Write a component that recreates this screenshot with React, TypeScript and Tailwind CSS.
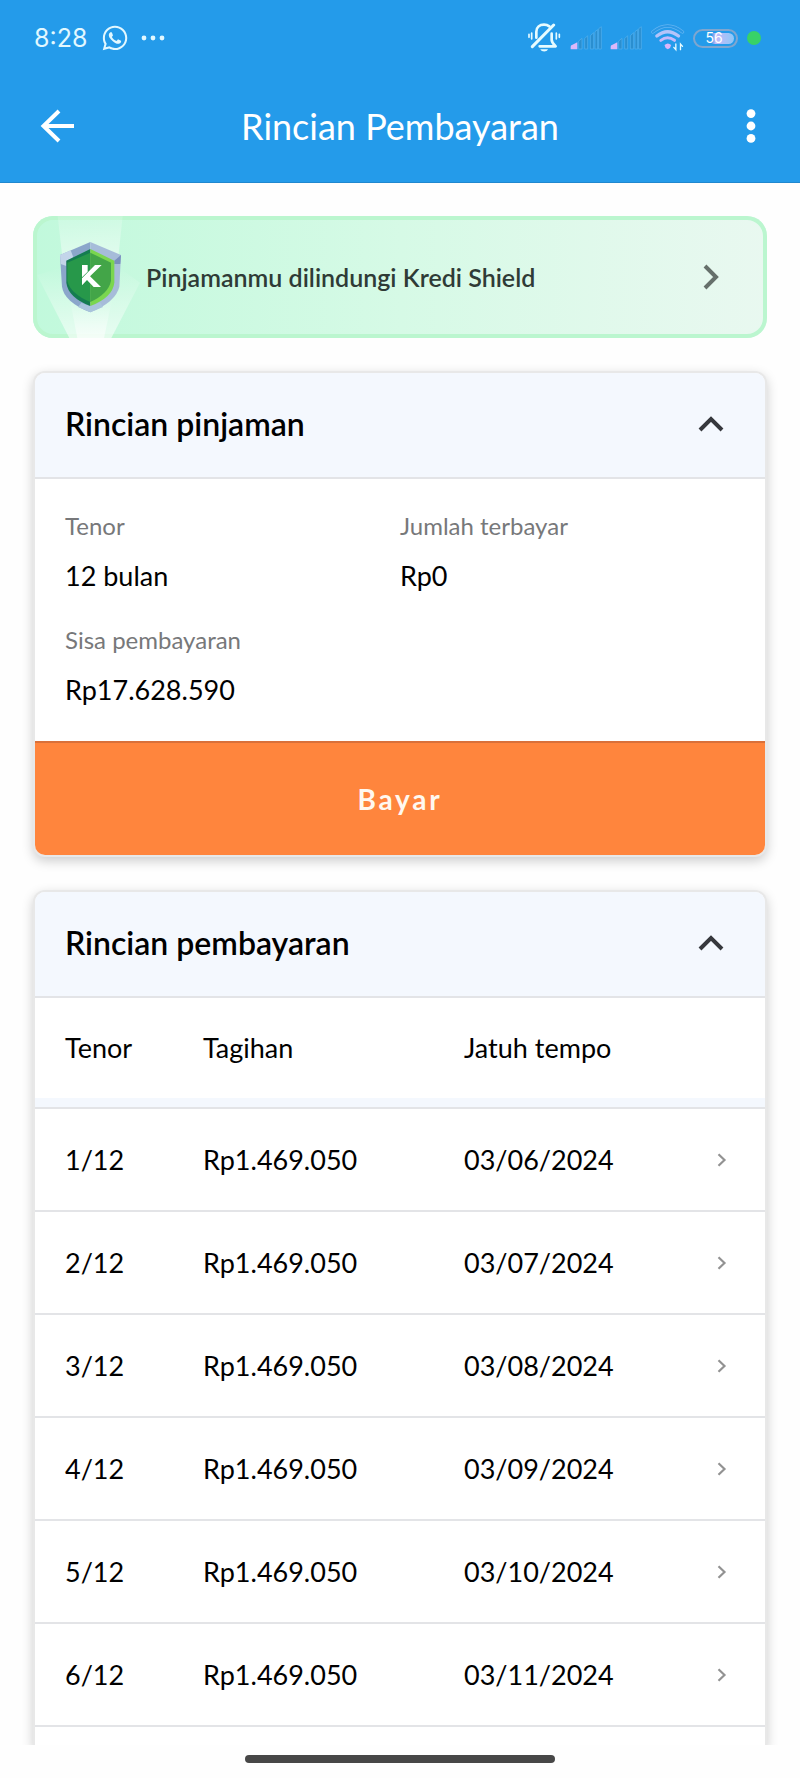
import { useState } from "react";
import { FaWhatsapp } from "react-icons/fa";

const installments = [
    { tenor: "1/12", amount: "Rp1.469.050", dueDate: "03/06/2024" },
    { tenor: "2/12", amount: "Rp1.469.050", dueDate: "03/07/2024" },
    { tenor: "3/12", amount: "Rp1.469.050", dueDate: "03/08/2024" },
    { tenor: "4/12", amount: "Rp1.469.050", dueDate: "03/09/2024" },
    { tenor: "5/12", amount: "Rp1.469.050", dueDate: "03/10/2024" },
    { tenor: "6/12", amount: "Rp1.469.050", dueDate: "03/11/2024" },
];

const loanInfo = [
    { label: "Tenor", value: "12 bulan" },
    { label: "Jumlah terbayar", value: "Rp0" },
    { label: "Sisa pembayaran", value: "Rp17.628.590" },
];

const BellOffIcon = () => (
    <svg viewBox="80 40 102 90" className="h-[30px] w-[34px]" fill="none" stroke="#e6fbff" strokeWidth="8" strokeLinecap="round">
        <path d="M108 84V66C108 52 118 45 131 45C138 45 143 47 147 50" />
        <path d="M154 72V90C154 98 160 103 166 110H118" strokeLinejoin="round" />
        <path d="M96 111L160 46" strokeWidth="9" />
        <path d="M120 119H143C139 128 124 128 120 119Z" fill="#e6fbff" stroke="none" />
        <path d="M94 70V88M86 74V83M168 70V88M177 74V83" strokeWidth="5" />
    </svg>
);

const SignalIcon = () => (
    <svg viewBox="0 0 96 72" className="h-[24px] w-[32px]">
        <path d="M2 70V62Q2 58 6 57L22 49V70Z" fill="#dcb8fa" />
        <g fill="#2a8ecf" stroke="#56b2ee" strokeWidth="2">
            <path d="M26 69V45L36 37V69Z" />
            <path d="M44 69V38L53 29V69Z" />
            <path d="M61 69V29L71 20V69Z" />
            <path d="M75 69V17L83 11V69Z" />
            <path d="M86 69V8L94 2V69Z" />
        </g>
    </svg>
);

const WifiIcon = () => (
    <svg viewBox="450 44 104 84" className="h-[28px] w-[35px]" fill="none" strokeLinecap="round">
        <path d="M458 68Q502 32 547 68" stroke="#62b5f2" strokeWidth="10" />
        <path d="M458 68Q502 32 547 68" stroke="#2b98e6" strokeWidth="6" />
        <path d="M470 80Q502 54 535 80" stroke="#b4c4fa" strokeWidth="10" />
        <path d="M482 93Q502 78 523 93" stroke="#c6b9fb" strokeWidth="9" />
        <path d="M493 107Q503 98 513 107Q512 116 503 120Q494 116 493 107Z" fill="#ddb5fa" />
        <path d="M527 104V121L521 114M541 121V104L547 111" stroke="#e6fbff" strokeWidth="4" />
    </svg>
);

const ShieldArt = () => (
    <svg viewBox="39 48 330 366" className="absolute left-0 top-0 h-[122px] w-[110px]" aria-hidden="true">
        <defs>
            <linearGradient id="beamTop" x1="0" y1="0" x2="0" y2="1">
                <stop offset="0" stopColor="#fff" stopOpacity="0.15" />
                <stop offset="1" stopColor="#fff" stopOpacity="0.5" />
            </linearGradient>
            <linearGradient id="beamBottom" x1="0" y1="0" x2="0" y2="1">
                <stop offset="0" stopColor="#fff" stopOpacity="0" />
                <stop offset="1" stopColor="#fff" stopOpacity="0.6" />
            </linearGradient>
        </defs>
        <path d="M113 48H308L294 180H128Z" fill="url(#beamTop)" />
        <path d="M51 225L130 200H294L360 248L274 414H148Z" fill="url(#beamBottom)" />
        <path d="M150 300H276L252 414H172Z" fill="url(#beamBottom)" />
        {/* metal rim */}
        <path d="M211 126L120 165L126 260Q132 305 211 337Z" fill="#8ba6cb" />
        <path d="M211 126L303 165L298 260Q288 305 211 337Z" fill="#a6bcd9" />
        <path d="M120 165L152 151L160 172L139 182V198L122 192Z" fill="#c3d5ea" />
        <path d="M303 165L283 182V192L301 192Z" fill="#7990bd" />
        <path d="M184 308L211 319L240 307L249 321L211 337L174 321Z" fill="#a9c4dc" />
        {/* green face */}
        <path d="M211 147L139 182V248Q144 292 211 318Z" fill="#157c50" />
        <path d="M211 147L283 182V248Q278 292 211 318Z" fill="#7ad64f" />
        <path d="M211 158L142 188V242Q150 280 211 306Z" fill="#27984a" />
        <path d="M211 158L273 188V242Q266 280 211 306Z" fill="#43a548" />
        {/* K mark */}
        <path d="M186 195H203V215L186 232Z" fill="#fff" />
        <path d="M225 195H245L210 229L243 261H221L201 240L186 256V235Z" fill="#fff" />
    </svg>
);

const StatusBar = () => (
    <div className="flex h-[76px] items-center justify-between pl-[34px] pr-[39px]">
        <div className="flex items-center text-[#e2f8ff]">
            <span className="font-[Inter,sans-serif] text-[25px] leading-8">8:28</span>
            <FaWhatsapp className="ml-[14px] size-7" />
            <svg viewBox="0 0 24 6" className="ml-[12px] h-[6px] w-[24px]" fill="currentColor">
                <circle cx="3" cy="3" r="2.4" />
                <circle cx="12" cy="3" r="2.4" />
                <circle cx="21" cy="3" r="2.4" />
            </svg>
        </div>
        <div className="flex items-center">
            <BellOffIcon />
            <span className="ml-[9px] flex gap-2">
                <SignalIcon />
                <SignalIcon />
            </span>
            <span className="ml-[8px]">
                <WifiIcon />
            </span>
            <span className="ml-[8px] flex h-[19px] w-[45px] items-center rounded-full border-2 border-[#7fa6cf] p-[2px]">
                <span className="flex h-full w-full items-center justify-center rounded-full bg-linear-to-r from-[#249bea] from-40% via-[#c0b8f8] via-50% to-[#8cc8f8] pr-[3px] font-[Inter,sans-serif] text-[14px] leading-none text-white">
                    56
                </span>
            </span>
            <span className="ml-[9px] size-[14px] rounded-full bg-[#38d268]" />
        </div>
    </div>
);

const CardHeader = ({ title, open, onToggle }: { title: string; open: boolean; onToggle: () => void }) => (
    <h2 className="border-b-2 border-[#e3e4e7] bg-[#f4f8fe]">
        <button
            type="button"
            aria-expanded={open}
            onClick={onToggle}
            className="flex h-[104px] w-full items-center justify-between pb-[2px] pl-[30px] pr-[41px] text-left text-[32px] font-semibold leading-9 text-black"
        >
            {title}
            <svg viewBox="0 0 26 16" className={`h-4 w-[26px] ${open ? "" : "rotate-180"}`} fill="none" stroke="#36383d" strokeWidth="4">
                <path d="M2 14L13 3L24 14" />
            </svg>
        </button>
    </h2>
);

export default function App() {
    const [loanOpen, setLoanOpen] = useState(true);
    const [paymentOpen, setPaymentOpen] = useState(true);

    return (
        <div className="flex h-screen flex-col bg-[#fefefe] font-[Lato,sans-serif] text-black">
            <header className="shrink-0 border-b border-[#2088cf] bg-[#249bea]">
                <StatusBar />
                <div className="mb-[6px] flex h-[100px] items-center justify-between px-[40px] text-white">
                    <button type="button" aria-label="Kembali" className="w-[34px]">
                        <svg viewBox="0 0 34 34" className="size-[34px]" fill="none" stroke="currentColor" strokeWidth="4">
                            <path d="M19 2L3.5 17L19 32M3.5 17H34" />
                        </svg>
                    </button>
                    <h1 className="text-[36px] leading-10">Rincian Pembayaran</h1>
                    <button type="button" aria-label="Menu" className="flex w-[34px] justify-end pr-1">
                        <svg viewBox="0 0 10 34" className="h-[34px] w-[10px]" fill="currentColor">
                            <circle cx="5" cy="4.6" r="4.4" />
                            <circle cx="5" cy="17" r="4.4" />
                            <circle cx="5" cy="29.4" r="4.4" />
                        </svg>
                    </button>
                </div>
            </header>

            <main className="flex min-h-0 flex-1 flex-col overflow-hidden px-[35px] pt-[33px]">
                <button
                    type="button"
                    className="relative -mx-[2px] flex h-[122px] shrink-0 items-center justify-between overflow-hidden rounded-[20px] bg-linear-to-r from-[#c1f9dc] via-[#d6fae6] to-[#e9f8f0] pl-[113px] pr-[48px] text-left shadow-[inset_0_0_0_4px_#bbf6cf]"
                >
                    <ShieldArt />
                    <span className="text-[25px] font-semibold leading-8 text-[#2f3b36]">Pinjamanmu dilindungi Kredi Shield</span>
                    <svg viewBox="0 0 16 26" className="h-[26px] w-4" fill="none" stroke="#66706b" strokeWidth="4">
                        <path d="M2 2L13 13L2 24" />
                    </svg>
                </button>

                <section className="mt-[35px] shrink-0 overflow-hidden rounded-[10px] bg-white shadow-[0_0_0_2px_#e8e8e8,0_4px_12px_2px_rgba(0,0,0,0.2)]">
                    <CardHeader title="Rincian pinjaman" open={loanOpen} onToggle={() => setLoanOpen(!loanOpen)} />
                    {loanOpen && (
                        <dl className="grid grid-cols-2 gap-y-[29px] px-[30px] pb-[33px] pt-[30px]">
                            {loanInfo.map((item) => (
                                <div key={item.label}>
                                    <dt className="text-[24px] leading-[34px] text-[#77787a]">{item.label}</dt>
                                    <dd className="mt-[15px] text-[27px] leading-9">{item.value}</dd>
                                </div>
                            ))}
                        </dl>
                    )}
                    <button
                        type="button"
                        className="block h-[114px] w-full border-t-2 border-[#d9703a] bg-[#ff853d] text-[28px] font-bold leading-9 tracking-widest text-[#fff8ef]"
                    >
                        Bayar
                    </button>
                </section>

                <section className="mt-[37px] flex-1 overflow-hidden rounded-t-[10px] bg-white shadow-[0_0_0_2px_#e8e8e8,0_4px_12px_2px_rgba(0,0,0,0.2)]">
                    <CardHeader title="Rincian pembayaran" open={paymentOpen} onToggle={() => setPaymentOpen(!paymentOpen)} />
                    {paymentOpen && (
                        <table className="w-full table-fixed border-collapse text-left text-[27px] leading-9">
                            <thead>
                                <tr className="h-[100px]">
                                    <th scope="col" className="w-[168px] pl-[30px] font-normal">Tenor</th>
                                    <th scope="col" className="w-[261px] font-normal">Tagihan</th>
                                    <th scope="col" className="font-normal">Jatuh tempo</th>
                                    <th scope="col" className="w-[60px]" aria-label="Detail" />
                                </tr>
                                <tr className="h-[10px] border-b-2 border-[#e3e4e7] bg-[#f4f8fe]">
                                    <td colSpan={4} />
                                </tr>
                            </thead>
                            <tbody>
                                {installments.map((item) => (
                                    <tr key={item.tenor} className="h-[103px] border-b-2 border-[#e3e4e7]">
                                        <td className="pl-[30px]">{item.tenor}</td>
                                        <td>{item.amount}</td>
                                        <td>{item.dueDate}</td>
                                        <td>
                                            <button type="button" aria-label={`Detail ${item.tenor}`} className="ml-[12px] block">
                                                <svg viewBox="0 0 10 14" className="h-[14px] w-[10px]" fill="none" stroke="#929292" strokeWidth="2.2">
                                                    <path d="M1.5 1.2L7.5 7L1.5 12.8" />
                                                </svg>
                                            </button>
                                        </td>
                                    </tr>
                                ))}
                            </tbody>
                        </table>
                    )}
                </section>
            </main>

            {/* gesture bar */}
            <footer className="flex h-[33px] shrink-0 justify-center pt-[10px]">
                <div className="h-[8px] w-[310px] rounded-full bg-[#474747]" />
            </footer>
        </div>
    );
}
